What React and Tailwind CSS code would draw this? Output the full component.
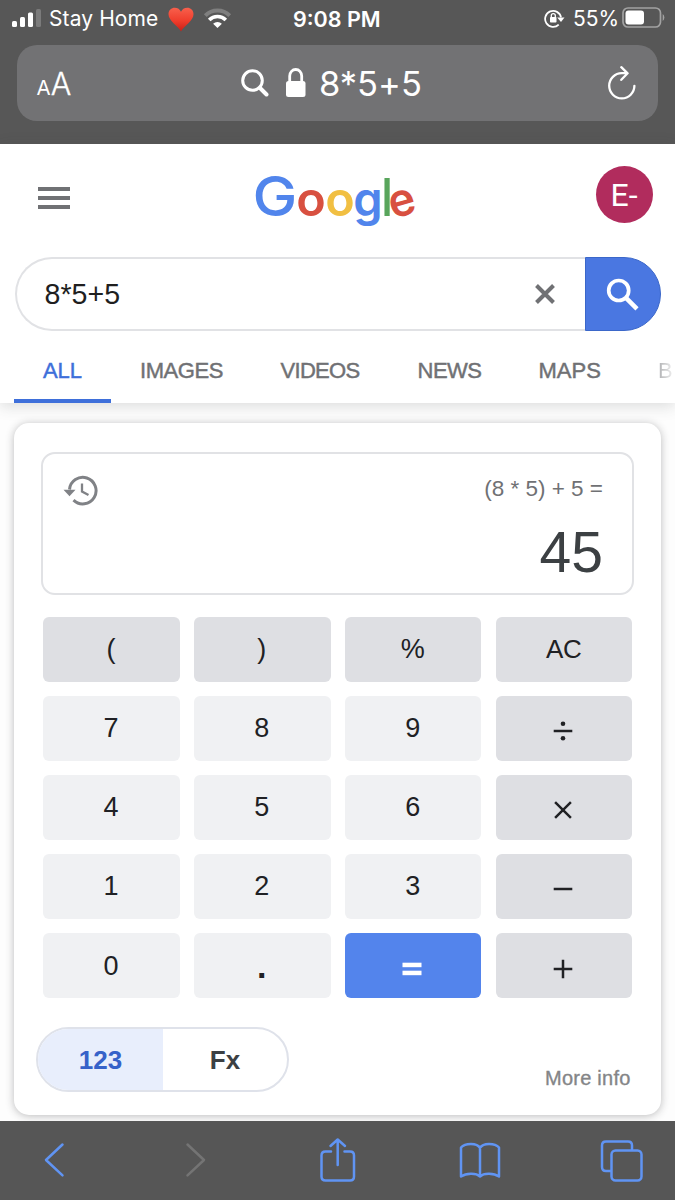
import React from "react";

const sf = "font-['Inter','Liberation_Sans',sans-serif]";

function StatusBar() {
  return (
    <div className="flex h-[38px] shrink-0 items-center">
      <svg className="ml-[11px] h-[20px] w-[31px] shrink-0" viewBox="0 0 31 20" fill="#fff">
        <rect x="1" y="12" width="5" height="6" rx="1.500" />
        <rect x="9" y="8" width="5" height="10" rx="1.500" />
        <rect x="17" y="3.500" width="5" height="14.500" rx="1.500" />
        <rect x="25" y="0" width="5" height="18" rx="1.500" fill="#7b7b7b" />
      </svg>
      <span className="ml-[7px] w-[119px] whitespace-nowrap text-[21px] leading-[38px] tracking-[0.1px]">Stay Home</span>
      <svg className="h-[26px] w-[26px] shrink-0" viewBox="0 0 26 26">
        <defs>
          <linearGradient id="heart" x1="0" y1="0" x2="0" y2="1">
            <stop offset="0" stopColor="#f8604c" />
            <stop offset=".55" stopColor="#ef3d2c" />
            <stop offset="1" stopColor="#c71f17" />
          </linearGradient>
        </defs>
        <path d="M13 25.500C10.500 20 .5 15 .5 8.200C.5 4 3.500 1.700 6.700 1.700C9.700 1.700 12 3.300 13 5.800C14 3.300 16.300 1.700 19.300 1.700C22.500 1.700 25.500 4 25.500 8.200C25.500 15 15.500 20 13 25.500Z" fill="url(#heart)" />
      </svg>
      <svg className="ml-[8.500px] h-[22px] w-[29px] shrink-0" viewBox="0 0 29 22" fill="none">
        <path d="M2.300 7.700A17.200 17.200 0 0 1 26.700 7.700" stroke="#7f7f7f" strokeWidth="4" />
        <path d="M6.200 12.100A11.500 11.500 0 0 1 22.800 12.100" stroke="#fff" strokeWidth="3.600" />
        <path d="M14.500 20L10.100 15.700A6.300 6.300 0 0 1 18.900 15.700Z" fill="#fff" />
      </svg>
      <span className="ml-[61.500px] w-[100px] whitespace-nowrap text-[21.500px] font-semibold leading-[38px]">9:08 PM</span>
      <svg className="ml-[151px] h-[20px] w-[21px] shrink-0" viewBox="0 0 21 20" fill="none">
        <path d="M14.700 15.600A8 8 0 1 1 17 8.400" stroke="#fff" strokeWidth="1.800" />
        <path d="M13.200 8.400H20.500L17 12.900Z" fill="#fff" />
        <rect x="6" y="8" width="6.500" height="5.500" rx=".8" fill="#fff" />
        <path d="M7.300 8.500V6.600A2 2 0 0 1 11.300 6.600V8.500" stroke="#fff" strokeWidth="1.300" />
      </svg>
      <span className="ml-[8px] w-[49px] whitespace-nowrap text-[21px] leading-[38px]">55%</span>
      <svg className="mb-[2px] h-[22px] w-[44px] shrink-0" viewBox="0 0 44 22" fill="none">
        <rect x="1" y="1" width="37.500" height="19" rx="5" stroke="#a2a2a2" strokeWidth="1.700" />
        <rect x="3.500" y="3.500" width="18.500" height="14" rx="3" fill="#fff" />
        <path d="M40.700 7A4.500 4.500 0 0 1 40.700 14Z" fill="#a2a2a2" />
      </svg>
    </div>
  );
}

function AddressBar() {
  return (
    <div className="ml-[17px] mt-[7px] flex h-[76px] w-[641px] items-center rounded-[20px] bg-[#727274]">
      <span className="ml-[19.500px] mt-[5px] flex w-[36.500px] items-baseline whitespace-nowrap leading-[76px]">
        <span className="text-[20.500px]">A</span>
        <span className="text-[30.500px] font-light [-webkit-text-stroke:0.300px_currentColor]">A</span>
      </span>
      <svg className="ml-[168px] h-[28px] w-[28px] shrink-0" viewBox="0 0 28 28" fill="none" stroke="#fff">
        <circle cx="11.500" cy="11.500" r="9.800" strokeWidth="3" />
        <path d="M19 19L25.500 25.500" strokeWidth="4" strokeLinecap="round" />
      </svg>
      <svg className="ml-[17px] h-[30px] w-[20px] shrink-0" viewBox="0 0 20 30" fill="none">
        <rect x="0" y="13" width="19.500" height="16" rx="2.500" fill="#fff" />
        <path d="M3.700 14V8A6 6.500 0 0 1 15.700 8V14" stroke="#fff" strokeWidth="2.800" />
      </svg>
      <span className="ml-[13px] mt-[2px] w-[240px] whitespace-nowrap text-[34.500px] leading-[74px] [font-feature-settings:'calt'_0]">8*5+5</span>
      <svg className="ml-[48px] h-[34px] w-[30px] shrink-0" viewBox="0 0 30 34" fill="none" stroke="#fff" strokeWidth="2.300" strokeLinecap="round" strokeLinejoin="round">
        <path d="M19.500 7.200H14.800A12.600 12.600 0 1 0 27.400 19.800M14.300 1.200L20.600 7.300L14.300 13.800" />
      </svg>
    </div>
  );
}

function Logo() {
  return (
    <svg className="ml-[181px] mt-[24px] h-[64px] w-[170px] shrink-0 font-['Inter','Liberation_Sans',sans-serif]" viewBox="251 169 170 64" fontWeight="600">
      <text transform="translate(252.500 217) scale(1.080 1)" fontSize="55.500" fontWeight="500" fill="#5185ec">G</text>
      <text transform="translate(296.300 217) scale(1.010 1)" fontSize="48" fill="#d85040">o</text>
      <text transform="translate(325.300 217) scale(1.010 1)" fontSize="48" fill="#f1bf42">o</text>
      <text transform="translate(353.300 217)" fontSize="47" fill="#5185ec">g</text>
      <text transform="translate(380.900 216.500) scale(0.920 1)" fontSize="52.500" fontWeight="500" fill="#58a55c">l</text>
      <text transform="translate(392.700 220) rotate(-16) scale(0.980 1)" fontSize="46" fill="#d85040">e</text>
    </svg>
  );
}

function SearchHeader() {
  return (
    <div className="flex h-[259px] shrink-0 flex-col bg-white shadow-[0_3px_14px_rgba(60,64,67,0.18)]">
      <div className="flex h-[113px] shrink-0 items-start">
        <div className="ml-[37.500px] mt-[43px] flex w-[32.500px] flex-col gap-[5.200px]">
          <div className="h-[3.800px] bg-[#707174]" />
          <div className="h-[3.800px] bg-[#707174]" />
          <div className="h-[3.800px] bg-[#707174]" />
        </div>
        <Logo />
        <div className="ml-[175px] mt-[22px] flex h-[57px] w-[57px] items-center justify-center whitespace-nowrap rounded-full bg-[#b12c5d] pr-[1px] font-['Roboto',sans-serif] text-[32px] text-white">E-</div>
      </div>
      <div className="ml-[14.500px] flex h-[74px] w-[646px] shrink-0">
        <div className="flex flex-1 items-center rounded-l-full border-[2px] border-r-0 border-[#e1e2e5]">
          <span className="ml-[28px] flex-1 text-[28.600px] leading-[70px] text-[#1f1f1f]">8*5+5</span>
          <svg className="mr-[30px] h-[20px] w-[20px]" viewBox="0 0 20 20" stroke="#707174" strokeWidth="4">
            <path d="M1.500 1.500L18.500 18.500M18.500 1.500L1.500 18.500" />
          </svg>
        </div>
        <div className="flex w-[76px] items-center rounded-r-full border border-[#3b67c9] bg-[#4a77e1]">
          <svg className="ml-[20px] mt-[2px] h-[34px] w-[34px]" viewBox="0 0 34 34" fill="none" stroke="#fff" strokeWidth="3.700">
            <circle cx="12.700" cy="12.500" r="10" />
            <path d="M20.500 20.300L31 30.800" strokeWidth="4.500" />
          </svg>
        </div>
      </div>
      <div className="flex h-[72px] overflow-hidden whitespace-nowrap pl-[14px] text-[22px] leading-[79px] tracking-[-0.35px] text-[#707174] [-webkit-text-stroke:0.45px_currentColor]">
        <div className="w-[97px] shrink-0 border-b-[4px] border-[#3e6fda] text-center tracking-[0px] text-[#3e6fda]">ALL</div>
        <div className="ml-[29px] w-[140.500px] shrink-0 tracking-[-0.45px]">IMAGES</div>
        <div className="w-[137px] shrink-0 tracking-[-0.7px]">VIDEOS</div>
        <div className="w-[121px] shrink-0 tracking-[-0.5px]">NEWS</div>
        <div className="w-[119.500px] shrink-0 tracking-[0px]">MAPS</div>
        <div className="w-[17px] shrink-0 bg-linear-to-r from-[#b0b1b3] to-[#f8f8f8] bg-clip-text text-transparent [-webkit-text-stroke:0px]">B</div>
      </div>
    </div>
  );
}

function OpIcon({ d, dots }) {
  return (
    <svg className="mr-[1px] mt-[6px] h-[24px] w-[24px]" viewBox="-12 -12 24 24" stroke="#202124" strokeWidth="2.500" fill="none">
      <path d={d} />
      {dots && (
        <g fill="#202124" stroke="none">
          <circle cx="0" cy="-7.300" r="2.300" />
          <circle cx="0" cy="7.300" r="2.300" />
        </g>
      )}
    </svg>
  );
}

const keys = [
  ["(", 1], [")", 1], ["%", 1], [<span className="text-[26px] tracking-[-0.5px]">AC</span>, 1],
  ["7", 0], ["8", 0], ["9", 0], [<OpIcon d="M-9.300 0H9.300" dots />, 1],
  ["4", 0], ["5", 0], ["6", 0], [<OpIcon d="M-7.900 -7.900L7.900 7.900M7.900 -7.900L-7.900 7.900" />, 1],
  ["1", 0], ["2", 0], ["3", 0], [<OpIcon d="M-9.300 0H9.300" />, 1],
  ["0", 0],
  [<span className="block text-[34px] font-bold">.</span>, 0],
  [
    <svg className="mr-[1px] mt-[6px] h-[24px] w-[24px]" viewBox="-12 -12 24 24" fill="#fff">
      <rect x="-9.500" y="-6.300" width="19" height="4.500" />
      <rect x="-9.500" y="1.700" width="19" height="4.500" />
    </svg>,
    2,
  ],
  [<OpIcon d="M-9.300 0H9.300M0 -9.300V9.300" />, 1],
];

const tones = ["bg-[#f0f1f3]", "bg-[#dedfe3]", "bg-[#5384ec]"];

function Calculator() {
  return (
    <div className="ml-[14px] mt-[20px] flex h-[692px] w-[647px] shrink-0 flex-col rounded-[15px] bg-white shadow-[0_1px_9px_rgba(32,33,36,0.3)]">
      <div className="ml-[26.500px] mt-[28.500px] flex h-[143.500px] w-[593.500px] shrink-0 justify-between rounded-[14px] border-[2px] border-[#e1e2e5]">
        <svg className="ml-[20px] mt-[19.500px] h-[36px] w-[36px]" viewBox="0 0 36 36" fill="none" stroke="#808286">
          <path d="M6.500 16.500A13.300 13.300 0 1 1 10.500 27.200" strokeWidth="3" />
          <path d="M.5 16.800H12.500L6.500 23.300Z" fill="#808286" stroke="none" />
          <path d="M19 10.500V18.500L25.500 22" strokeWidth="2.300" />
        </svg>
        <div className="mr-[29px] text-right">
          <div className="mt-[19px] whitespace-nowrap text-[22.500px] leading-[31px] text-[#707174]">(8 * 5) + 5 =</div>
          <div className="mt-[15px] text-[57px] leading-[66px] text-[#3c4043]">45</div>
        </div>
      </div>
      <div className="ml-[29.300px] mt-[21.800px] grid w-[589px] shrink-0 auto-rows-[64.900px] grid-cols-4 gap-x-[14.600px] gap-y-[14.200px]">
        {keys.map(([label, tone], i) => (
          <div key={i} className={"flex items-center justify-center rounded-[6px] pr-[1px] text-[27px] leading-[64px] text-[#202124] " + tones[tone]}>
            {label}
          </div>
        ))}
      </div>
      <div className="flex items-start">
        <div className="ml-[22px] mt-[28.500px] flex h-[65px] w-[253px] overflow-hidden rounded-full border-[2px] border-[#dfe2ea] text-[26px] font-bold leading-[62px]">
          <div className="w-[125px] bg-[#e8eefc] text-center text-[#3662c9]">123</div>
          <div className="flex-1 text-center text-[#3c4043]">Fx</div>
        </div>
        <div className="ml-[256px] mt-[67.500px] whitespace-nowrap text-[20px] leading-[24px] tracking-[0.25px] text-[#848587] [-webkit-text-stroke:0.35px_currentColor]">More info</div>
      </div>
    </div>
  );
}

function Toolbar() {
  return (
    <div className="h-[79px] shrink-0 bg-[#565656]">
      <svg className="h-[79px] w-[675px]" viewBox="0 1121 675 79" fill="none" stroke="#6094f3" strokeWidth="2.500" strokeLinecap="round" strokeLinejoin="round">
        <path d="M62.500 1144.500L46 1160L62.500 1175.300" />
        <path d="M187.500 1144.500L204 1160L187.500 1175.300" stroke="#747474" />
        <path d="M331 1151.500H325.500Q321.500 1151.500 321.500 1155.500V1176.500Q321.500 1180.500 325.500 1180.500H350Q354 1180.500 354 1176.500V1155.500Q354 1151.500 350 1151.500H344.500M337.700 1165V1139.800M330.500 1146L337.700 1139.500L345 1146" />
        <path d="M480 1148C477 1142.500 465 1143 461 1147.500V1176.500C466 1173 476 1172.500 480 1176.500C484 1172.500 494 1173 499 1176.500V1147.500C495 1143 483 1142.500 480 1148V1176.500" />
        <path d="M610.500 1171H606Q602 1171 602 1167V1145.500Q602 1141.500 606 1141.500H628Q632 1141.500 632 1145.500V1149.500" />
        <rect x="611.500" y="1150.500" width="30" height="30" rx="4" />
      </svg>
    </div>
  );
}

export default function App() {
  return (
    <div className="flex h-[1200px] w-[675px] flex-col overflow-hidden bg-[#fdfdfd] font-['Liberation_Sans',sans-serif]">
      <div className={"flex h-[144px] shrink-0 flex-col bg-[#575757] text-white " + sf}>
        <StatusBar />
        <AddressBar />
      </div>
      <SearchHeader />
      <div className="h-[718px] shrink-0 overflow-hidden">
        <Calculator />
      </div>
      <Toolbar />
    </div>
  );
}
